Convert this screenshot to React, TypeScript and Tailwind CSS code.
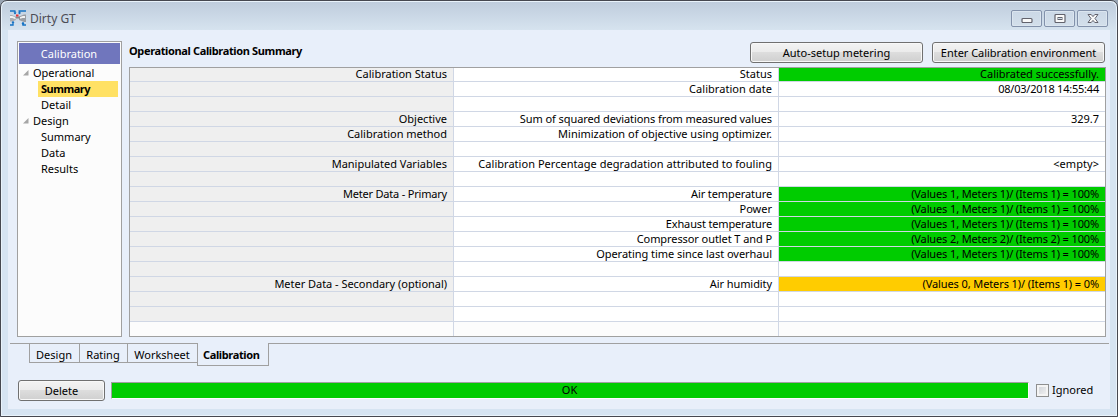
import React from "react";

type Row = { group?: string; label?: string; value?: string; tone?: "ok" | "warn"; groupTrack?: string; labelTrack?: string; valueTrack?: string };

const meters = "tracking-[-0.13px]";

const rows: Row[] = [
  { group: "Calibration Status", label: "Status", value: "Calibrated successfully.", tone: "ok", valueTrack: "tracking-[-0.03px]" },
  { label: "Calibration date", value: "08/03/2018 14:55:44", labelTrack: "tracking-[0.04px]", valueTrack: "tracking-[-0.22px]" },
  {},
  { group: "Objective", label: "Sum of squared deviations from measured values", value: "329.7", labelTrack: "tracking-[-0.08px]" },
  { group: "Calibration method", label: "Minimization of objective using optimizer.", labelTrack: "tracking-[-0.01px]" },
  {},
  { group: "Manipulated Variables", label: "Calibration Percentage degradation attributed to fouling", value: "<empty>", labelTrack: "tracking-[0.035px]", valueTrack: "tracking-[0.05px]" },
  {},
  { group: "Meter Data - Primary", label: "Air temperature", value: "(Values 1, Meters 1)/ (Items 1) = 100%", tone: "ok", groupTrack: "tracking-[-0.2px]", labelTrack: "tracking-[-0.1px]", valueTrack: meters },
  { label: "Power", value: "(Values 1, Meters 1)/ (Items 1) = 100%", tone: "ok", valueTrack: meters },
  { label: "Exhaust temperature", value: "(Values 1, Meters 1)/ (Items 1) = 100%", tone: "ok", labelTrack: "tracking-[-0.15px]", valueTrack: meters },
  { label: "Compressor outlet T and P", value: "(Values 2, Meters 2)/ (Items 2) = 100%", tone: "ok", labelTrack: "tracking-[-0.08px]", valueTrack: meters },
  { label: "Operating time since last overhaul", value: "(Values 1, Meters 1)/ (Items 1) = 100%", tone: "ok", labelTrack: "tracking-[-0.04px]", valueTrack: meters },
  {},
  { group: "Meter Data - Secondary (optional)", label: "Air humidity", value: "(Values 0, Meters 1)/ (Items 1) = 0%", tone: "warn", groupTrack: "tracking-[-0.03px]", labelTrack: "tracking-[-0.08px]", valueTrack: "tracking-[-0.1px]" },
  {},
  {},
];

const tones = { ok: "bg-[#00cc00]", warn: "bg-[#ffcc00]", none: "bg-white" };

function AppIcon() {
  return (
    <svg width="17" height="17" viewBox="0 0 17 17">
      <path d="M0 5H2L6 7V10L2 11.500H0Z" fill="#a9acb0" />
      <path d="M16 4.500H14L9 6.500V10L14 12H16Z" fill="#9a9da2" />
      <path d="M0 7H2L6 8.500M15 7H13L10 8" stroke="#f1f2f3" strokeWidth="1.800" fill="none" />
      <path d="M5.500 6.500H10V8.500H5.500Z" fill="#85898e" />
      <path d="M0 1H5.500M8.500 1H16M5 1V4M9.500 1V4M3 11.500V15H0M13 12V15H16" stroke="#1673c4" strokeWidth="1.400" fill="none" />
      <path d="M3.500 2.500H6.500L5 4.500Z M8 2.500H11L9.500 4.500Z M1.500 13L3 11L4.500 13Z M11.500 13H14.500L13 15.500Z" fill="#1673c4" />
      <path d="M6 4.500H8.500V6.500H6Z" fill="#ee3030" />
    </svg>
  );
}

function CaptionButton({ children }: { children: React.ReactNode }) {
  return (
    <div className="flex h-[17px] w-[31px] items-center justify-center rounded-[2px] border border-[#8392ab] bg-linear-to-b from-[#cbd8e6] to-[#d3dfeb] shadow-[inset_0_0_0_1px_#dbe5ef]">
      {children}
    </div>
  );
}

function Button({ className, children }: { className: string; children: React.ReactNode }) {
  return (
    <button
      className={`flex h-[21px] shrink-0 items-center justify-center rounded-[3px] border border-[#707070] bg-[linear-gradient(#f3f3f3_0%,#ebebeb_48%,#dddddd_50%,#cfcfcf_100%)] shadow-[inset_0_0_0_1px_#f8f8f8] ${className}`}
    >
      {children}
    </button>
  );
}

function TreeParent({ children }: { children: string }) {
  return (
    <div className="flex h-4 items-center pl-[3px]">
      <svg width="8" height="8" viewBox="0 0 8 8" className="mr-[3px]">
        <path d="M6.500 1V6.500H1Z" fill="#a6a6a6" />
      </svg>
      <span className="-mt-0.5">{children}</span>
    </div>
  );
}

function TreeItem({ active, children }: { active?: boolean; children: string }) {
  return (
    <div
      className={`ml-[19px] mr-[2px] flex h-4 items-center pb-0.5 pl-[3px] ${active ? "bg-[#ffe164] font-bold tracking-[-0.5px]" : ""}`}
    >
      {children}
    </div>
  );
}

export default function App() {
  return (
    <div className="h-[417px] w-[1118px] overflow-hidden bg-[#99a5b3] font-['Noto_Sans','Open_Sans',sans-serif] text-[11px] leading-none text-black">
      <div className="flex h-full flex-col rounded-t-[7px] border border-[#464850] bg-[#d6e4f2] px-[7px] pb-[7px] shadow-[inset_0_0_0_1px_#e9f3fb]">
        <div className="-mx-[6px] mt-px flex h-7 shrink-0 items-start rounded-t-[6px] bg-linear-to-b from-[#bfcddd] to-[#d6e3ef] pl-[8px] pr-[8px]">
          <div className="pt-[8px]"><AppIcon /></div>
          <span className="ml-[3px] mt-[11px] text-[12px] leading-none text-[#4c4c55]">Dirty GT</span>
          <div className="ml-auto mt-[8px] flex gap-[2px]">
            <CaptionButton>
              <svg width="12" height="6" viewBox="0 0 12 6" className="mt-[3px]"><rect x="1" y="1.500" width="10" height="4" rx="1" fill="#f9f9f9" stroke="#62626c" strokeWidth="1.200" /></svg>
            </CaptionButton>
            <CaptionButton>
              <svg width="12" height="10" viewBox="0 0 12 10"><rect x="1" y="0.500" width="10" height="8" rx="1" fill="#f9f9f9" stroke="#62626c" strokeWidth="1.200" /><rect x="4" y="3.500" width="4" height="2" fill="#d0dce8" stroke="#62626c" /></svg>
            </CaptionButton>
            <CaptionButton>
              <svg width="12" height="10" viewBox="0 0 12 10"><path d="M1 .5H4.200L6 2.600L7.800 .5H11L8 4.500L11 8.500H7.800L6 6.400L4.200 8.500H1L4 4.500Z" fill="#f9f9f9" stroke="#62626c" /></svg>
            </CaptionButton>
          </div>
        </div>

        <div className="flex min-h-0 flex-1 flex-col bg-[#e8effa]">
          <div className="flex pl-[9px] pr-1 pt-[11px]">
            <aside className="h-[296px] w-[105px] shrink-0 border border-[#a0a0a0] bg-[#fcfcfc] p-px">
              <div className="mb-px flex h-[21px] items-center justify-center bg-[#7076bd] pr-px text-white">Calibration</div>
              <TreeParent>Operational</TreeParent>
              <TreeItem active>Summary</TreeItem>
              <TreeItem>Detail</TreeItem>
              <TreeParent>Design</TreeParent>
              <TreeItem>Summary</TreeItem>
              <TreeItem>Data</TreeItem>
              <TreeItem>Results</TreeItem>
            </aside>

            <main className="ml-[7px] w-[977px]">
              <div className="flex h-[26px] items-start pr-px pt-px">
                <h1 className="mt-[3px] font-bold tracking-[-0.36px]">Operational Calibration Summary</h1>
                <Button className="ml-auto w-[173px]">Auto-setup metering</Button>
                <Button className="ml-[9px] w-[173px] tracking-[-0.03px]">Enter Calibration environment</Button>
              </div>
              <div className="flex h-[270px] flex-col border border-[#a0a0a0] bg-[#fcfcfc]">
                {rows.map((row, i) => (
                  <div
                    key={i}
                    className={`grid shrink-0 grid-cols-[324px_325px_326px] border-b border-[#d0d7e5] text-right ${i === 0 ? "h-[14px]" : "h-[15px]"}`}
                  >
                    <div className={`flex items-center justify-end border-r border-[#d0d7e5] bg-[#efefef] pb-0.5 pr-[6px] ${row.groupTrack ?? ""}`}>{row.group}</div>
                    <div className={`flex items-center justify-end border-r border-[#d0d7e5] bg-white pb-0.5 pr-[6px] ${row.labelTrack ?? ""}`}>{row.label}</div>
                    <div className={`flex items-center justify-end pb-0.5 pr-[6px] ${row.valueTrack ?? ""} ${tones[row.tone ?? "none"]}`}>{row.value}</div>
                  </div>
                ))}
                <div className="grid flex-1 grid-cols-[324px_325px_326px]">
                  <div className="border-r border-[#d0d7e5]" />
                  <div className="border-r border-[#d0d7e5]" />
                  <div />
                </div>
              </div>
            </main>
          </div>

          <nav className="mt-[6px] flex h-[23px] items-start pl-[2px] pr-px">
            <div className="w-[19px] border-t border-[#a0a0a0]" />
            <div className="flex h-5 w-[51px] items-center justify-center border border-[#a0a0a0] pr-px pt-[3px]">Design</div>
            <div className="flex h-5 w-[48px] items-center justify-center border border-l-0 border-[#a0a0a0] pr-px pt-[3px]">Rating</div>
            <div className="flex h-5 w-[69px] items-center justify-center border border-x-0 border-[#a0a0a0] pr-px pt-[3px]">Worksheet</div>
            <div className="flex h-[23px] w-[72px] items-center border border-t-0 border-[#a0a0a0] pl-[5px] pt-[1px] font-bold tracking-[-0.36px]">Calibration</div>
            <div className="flex-1 border-t border-[#a0a0a0]" />
          </nav>

          <footer className="mt-[14px] flex h-[21px] items-center pl-[10px]">
            <Button className="w-[87px]">Delete</Button>
            <div className="ml-[6px] flex h-[17px] w-[918px] items-center justify-center border border-[#fdfdfd] border-l-[#a0a0a0] border-t-[#a0a0a0] bg-[#00cc00] pb-0.5 pr-px">OK</div>
            <label className="ml-[7px] flex items-center">
              <span className="-mt-px h-[13px] w-[13px] border border-[#8e8f8f] bg-linear-to-br from-[#cbcfd5] to-[#f6f6f6] shadow-[inset_0_0_0_2px_#f4f4f4]" />
              <span className="-mt-0.5 ml-[3px]">Ignored</span>
            </label>
          </footer>
        </div>
      </div>
    </div>
  );
}
